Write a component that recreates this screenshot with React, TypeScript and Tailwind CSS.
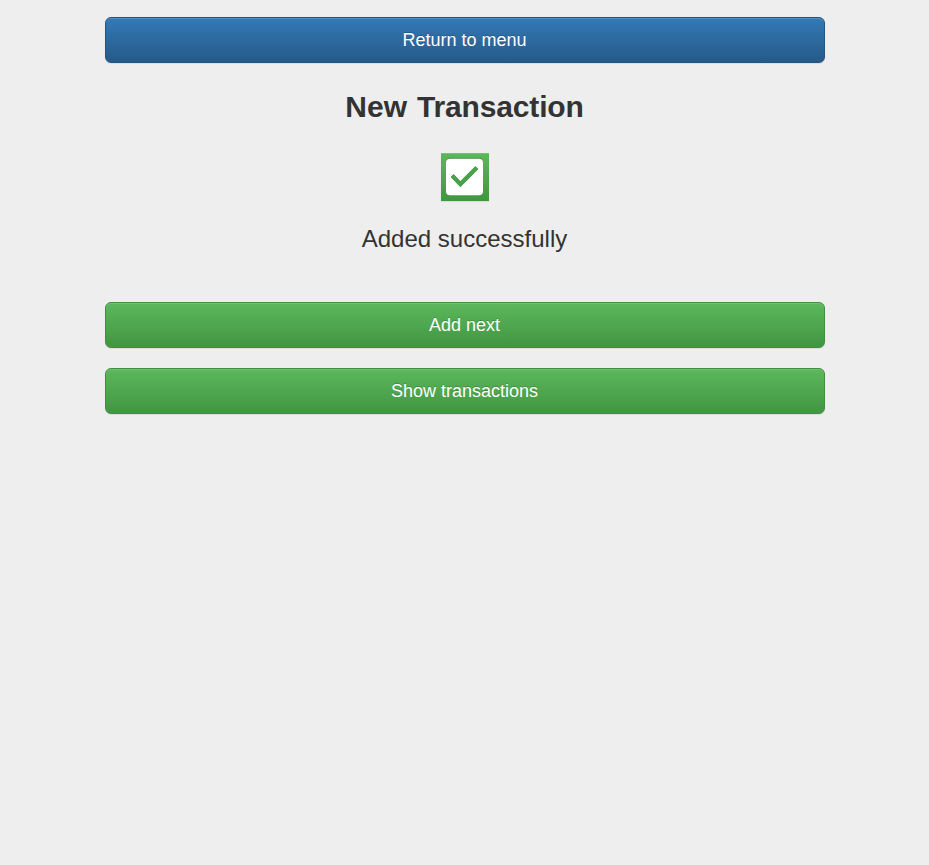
import React from "react";

const base =
  "block w-full h-[46px] rounded-[6px] border pr-px text-center text-[18px] leading-[24px] text-white [text-shadow:0_-1px_0_rgba(0,0,0,0.2)] shadow-[inset_0_1px_0_rgba(255,255,255,0.15),0_1px_1px_rgba(0,0,0,0.075)]";
const green = "border-[#3e8f3e] bg-linear-to-b from-[#5cb85c] to-[#419641]";
const blue = "border-[#245580] bg-linear-to-b from-[#337ab7] to-[#265a88]";
const checkbox =
  "M9.1 5.7H37.9A4.1 4.1 0 0 1 42 9.8V38.2A4.1 4.1 0 0 1 37.9 42.3H9.1A4.1 4.1 0 0 1 5 38.2V9.8A4.1 4.1 0 0 1 9.1 5.7ZM12.7 21.2L9.8 24.1L19.4 34L37.2 16.1L34.3 13.2L19.4 28.2Z";

export default function App() {
  return (
    <main className="min-h-screen bg-[#eeeeee] pt-[17px] font-['Liberation_Sans',Arial,sans-serif] text-[#333333]">
      <div className="ml-[105px] flex w-[720px] flex-col items-center">
        <button className={`${base} ${blue}`}>Return to menu</button>
        <h1 className="mt-[27px] mr-px text-[30px] font-bold leading-[33px] [word-spacing:1.6px]">
          New <span className="tracking-[-0.15px]">Transaction</span>
        </h1>
        <div className="mt-[30px] size-12 bg-linear-to-b from-[#5cb85c] to-[#419641] shadow-[inset_0_1px_0_rgba(255,255,255,0.15),0_1px_1px_rgba(0,0,0,0.075)]">
          <svg viewBox="0 0 48 48" className="size-12" fillRule="evenodd">
            <path transform="translate(0 -1)" fill="black" fillOpacity="0.2" d={checkbox} />
            <path fill="white" d={checkbox} />
            <path fill="#49a14b" d="M12.7 21.2L9.8 24.1L19.4 34L37.2 16.1L34.3 13.2L19.4 28.2Z" />
          </svg>
        </div>
        <p className="mt-[25px] mr-px text-[24px] leading-[26px]">Added successfully</p>
        <button className={`mt-[50px] ${base} ${green}`}>Add next</button>
        <button className={`mt-5 ${base} ${green}`}>Show transactions</button>
      </div>
    </main>
  );
}
